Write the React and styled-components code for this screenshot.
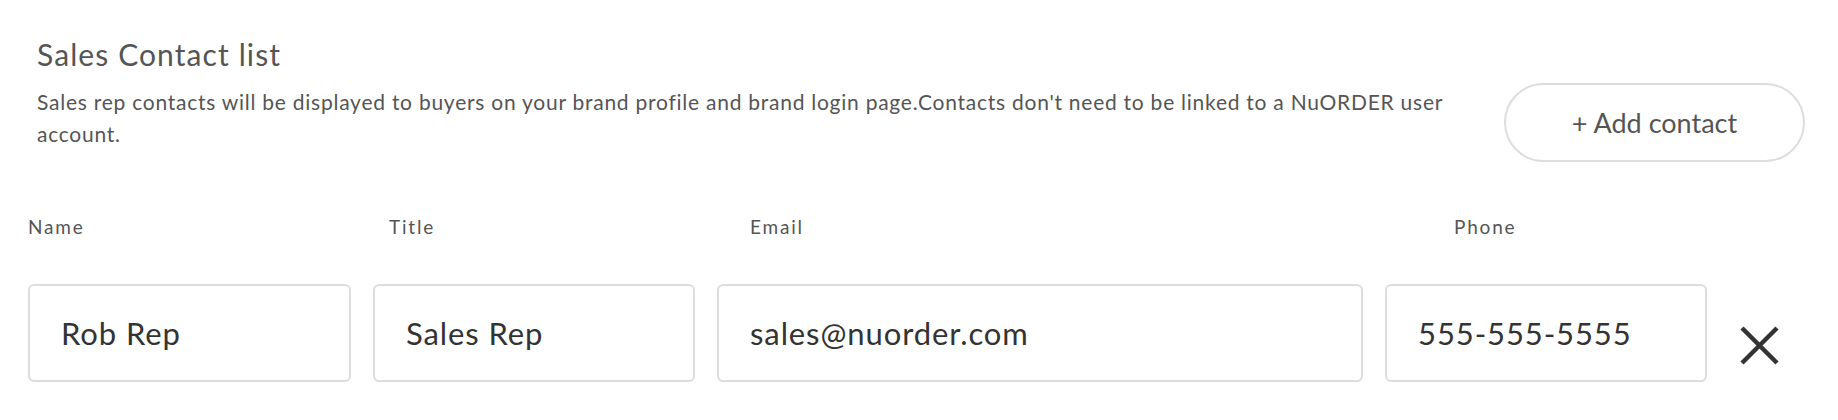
import styled, { createGlobalStyle } from 'styled-components';

const GlobalStyle = createGlobalStyle`
  body {
    margin: 0;
    background: #fff;
    font-family: Lato, "Open Sans", sans-serif;
  }
`;

const Page = styled.div`
  padding: 37px 33px 0 28px;
`;

const Heading = styled.div`
  padding-left: 9px;
`;

const Title = styled.h2`
  margin: 0;
  font-size: 30px;
  font-weight: 400;
  line-height: 34px;
  letter-spacing: 1.1px;
  color: #555;
`;

const IntroRow = styled.div`
  display: flex;
  align-items: flex-start;
  margin-top: 9px;
`;

const Description = styled.p`
  flex: 1;
  margin: 6px 26px 0 0;
  font-size: 21px;
  line-height: 32px;
  letter-spacing: 0.75px;
  color: #555;
`;

const AddButton = styled.button`
  width: 301px;
  height: 79px;
  margin-top: 3px;
  border: 2px solid #ddd;
  border-radius: 40px;
  background: #fff;
  font-family: inherit;
  font-size: 27px;
  color: #555;
  cursor: pointer;
`;

const LabelRow = styled.div`
  display: grid;
  grid-template-columns: 343px 343px 686px 343px;
  column-gap: 18px;
  margin-top: 54px;
`;

const Label = styled.span`
  font-size: 19px;
  line-height: 22px;
  letter-spacing: 1.8px;
  color: #555;
`;

const ContactRow = styled.div`
  display: grid;
  grid-template-columns: 323px 322px 646px 322px 39px;
  column-gap: 22px;
  margin-top: 46px;
`;

const Field = styled.input`
  box-sizing: border-box;
  width: 100%;
  height: 98px;
  padding: 0 31px;
  border: 2px solid #ddd;
  border-radius: 6px;
  background: #fff;
  font-family: inherit;
  font-size: 31px;
  letter-spacing: 0.9px;
  color: #333;
  outline: none;
`;

const RemoveButton = styled.button`
  align-self: start;
  margin: 42px 0 0 11px;
  padding: 0;
  width: 39px;
  height: 39px;
  border: none;
  background: none;
  cursor: pointer;

  svg {
    display: block;
  }
`;

const contacts = [
  { id: 1, name: 'Rob Rep', title: 'Sales Rep', email: 'sales@nuorder.com', phone: '555-555-5555' },
];

function App() {
  return (
    <Page>
      <GlobalStyle />
      <Heading>
        <Title>Sales Contact list</Title>
        <IntroRow>
          <Description>
            Sales rep contacts will be displayed to buyers on your brand profile and brand login page.Contacts don't need to be linked to a NuORDER user account.
          </Description>
          <AddButton>+ Add contact</AddButton>
        </IntroRow>
      </Heading>

      <LabelRow>
        <Label>Name</Label>
        <Label>Title</Label>
        <Label>Email</Label>
        <Label>Phone</Label>
      </LabelRow>

      {contacts.map(contact => (
        <ContactRow key={contact.id}>
          <Field defaultValue={contact.name} />
          <Field defaultValue={contact.title} />
          <Field defaultValue={contact.email} />
          <Field defaultValue={contact.phone} />
          <RemoveButton aria-label="Remove contact">
            <svg width="39" height="39" viewBox="0 0 39 39">
              <path d="M2 2 L37 37 M37 2 L2 37" stroke="#333" strokeWidth="4.5" fill="none" />
            </svg>
          </RemoveButton>
        </ContactRow>
      ))}
    </Page>
  );
}

export default App;
